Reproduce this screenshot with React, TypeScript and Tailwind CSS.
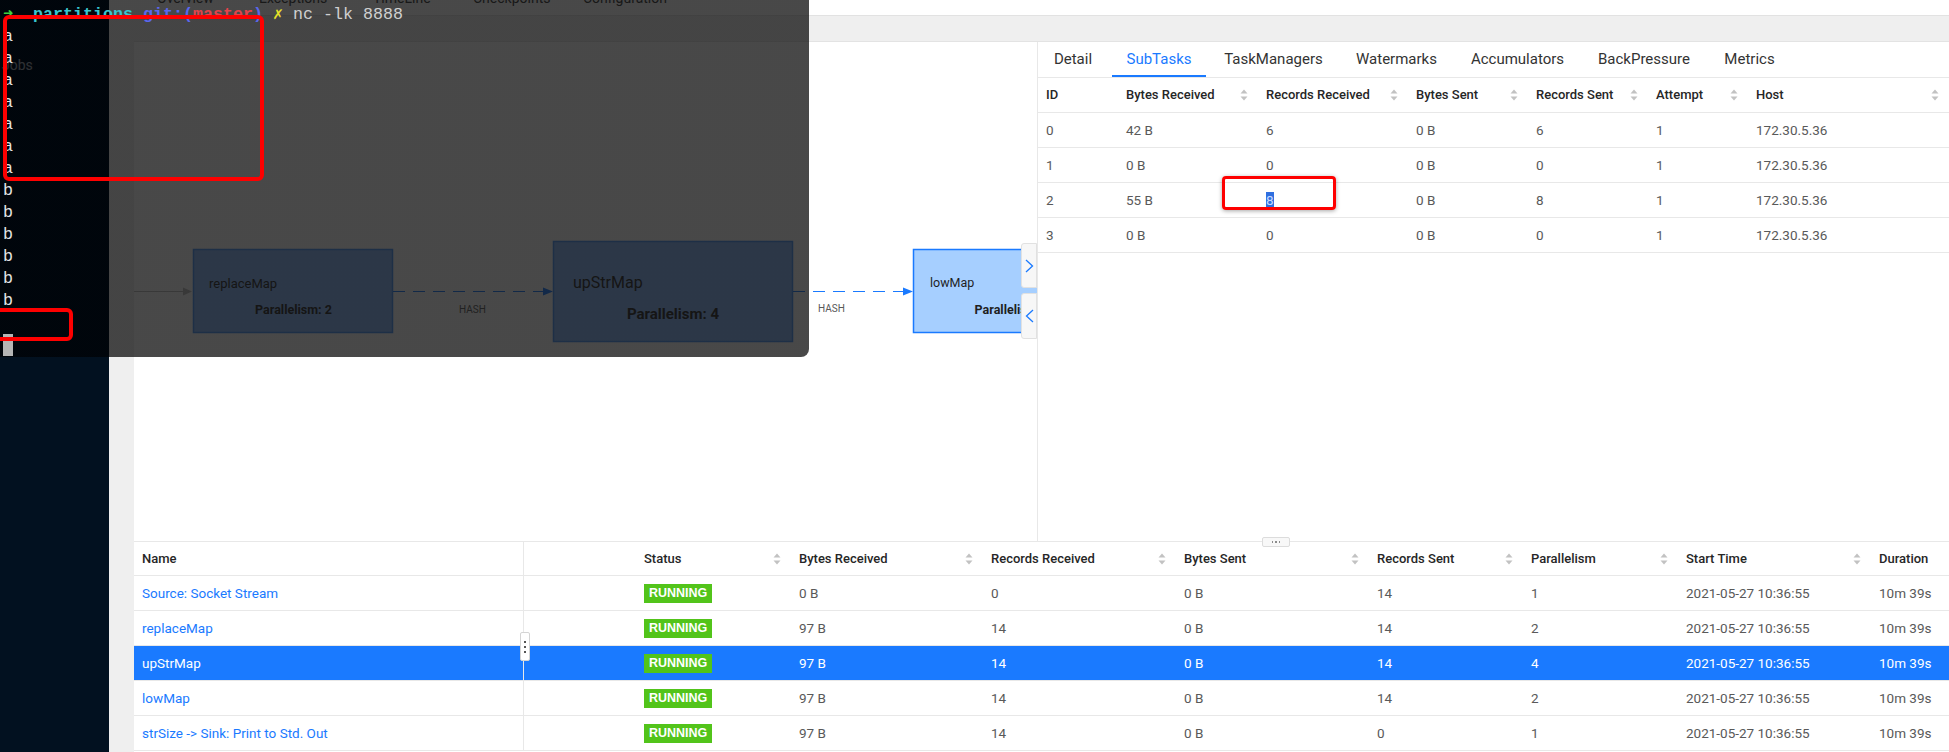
import React from 'react'

const subTaskHeaders = ['ID', 'Bytes Received', 'Records Received', 'Bytes Sent', 'Records Sent', 'Attempt', 'Host']

const subTaskRows = [
    ['0', '42 B', '6', '0 B', '6', '1', '172.30.5.36'],
    ['1', '0 B', '0', '0 B', '0', '1', '172.30.5.36'],
    ['2', '55 B', '8', '0 B', '8', '1', '172.30.5.36'],
    ['3', '0 B', '0', '0 B', '0', '1', '172.30.5.36'],
]

const vertexHeaders = [
    { label: 'Name', sort: false },
    { label: '', sort: false },
    { label: 'Status', sort: true },
    { label: 'Bytes Received', sort: true },
    { label: 'Records Received', sort: true },
    { label: 'Bytes Sent', sort: true },
    { label: 'Records Sent', sort: true },
    { label: 'Parallelism', sort: true },
    { label: 'Start Time', sort: true },
    { label: 'Duration', sort: false },
]

const vertexRows = [
    { name: 'Source: Socket Stream', br: '0 B', rr: '0', bs: '0 B', rs: '14', par: '1' },
    { name: 'replaceMap', br: '97 B', rr: '14', bs: '0 B', rs: '14', par: '2' },
    { name: 'upStrMap', br: '97 B', rr: '14', bs: '0 B', rs: '14', par: '4', selected: true },
    { name: 'lowMap', br: '97 B', rr: '14', bs: '0 B', rs: '14', par: '2' },
    { name: 'strSize -> Sink: Print to Std. Out', br: '97 B', rr: '14', bs: '0 B', rs: '0', par: '1' },
]

const tabs = [
    { name: 'Detail', w: 'w-[70px]' },
    { name: 'SubTasks', w: 'w-[94px]', active: true },
    { name: 'TaskManagers', w: 'w-[127px]' },
    { name: 'Watermarks', w: 'w-[111px]' },
    { name: 'Accumulators', w: 'w-[123px]' },
    { name: 'BackPressure', w: 'w-[122px]' },
    { name: 'Metrics', w: 'w-[81px]' },
]

const termLines = ['a', 'a', 'a', 'a', 'a', 'a', 'a', 'b', 'b', 'b', 'b', 'b', 'b']

const SortIcon = () => (
    <svg width="8" height="12" viewBox="0 0 8 12" className="absolute right-[10px] top-1/2 -translate-y-1/2">
        <path d="M4 0.5 L7.5 4.5 H0.5 Z" fill="#c2c2c2" />
        <path d="M4 11.5 L7.5 7.5 H0.5 Z" fill="#c2c2c2" />
    </svg>
)

const Chevron = ({ left }: { left?: boolean }) => (
    <svg width="9" height="14" viewBox="0 0 9 14">
        <polyline
            points={left ? '8,1 1.5,7 8,13' : '1,1 7.5,7 1,13'}
            fill="none"
            stroke="#1a7aff"
            strokeWidth="1.3"
        />
    </svg>
)

const JobGraph = () => (
    <svg width="903" height="499" className="absolute left-0 top-0">
        {/* incoming edge */}
        <line x1="0" y1="249.5" x2="51" y2="249.5" stroke="#bcbcbc" strokeWidth="1" />
        <path d="M58 249.5 L49 245.5 L49 253.5 Z" fill="#bcbcbc" />

        <rect x="59.5" y="207.5" width="199" height="83" fill="#87b6fa" stroke="#4a94f5" strokeWidth="1.5" />
        <text x="75" y="246" fontSize="13" fill="#262626">replaceMap</text>
        <text x="159.5" y="272" fontSize="12.5" fontWeight="700" fill="#262626" textAnchor="middle">Parallelism: 2</text>

        <line x1="259" y1="249.5" x2="410" y2="249.5" stroke="#1a7aff" strokeWidth="1.2" strokeDasharray="12 8" />
        <path d="M419 249.5 L409 245.5 L409 253.5 Z" fill="#1a7aff" />
        <text x="325" y="270.5" fontSize="10" fill="#595959">HASH</text>

        <rect x="419.5" y="199.5" width="239" height="100" fill="#87b6fa" stroke="#4a94f5" strokeWidth="1.5" />
        <text x="439" y="246" fontSize="16" fill="#262626">upStrMap</text>
        <text x="539" y="277" fontSize="15" fontWeight="700" fill="#262626" textAnchor="middle">Parallelism: 4</text>

        <line x1="659" y1="249.5" x2="770" y2="249.5" stroke="#1a7aff" strokeWidth="1.2" strokeDasharray="12 8" />
        <path d="M779 249.5 L769 245.5 L769 253.5 Z" fill="#1a7aff" />
        <text x="684" y="270" fontSize="10" fill="#595959">HASH</text>

        <rect x="779.5" y="207.5" width="199" height="83" fill="#a6cfff" stroke="#1a7aff" strokeWidth="1.5" />
        <text x="796" y="245" fontSize="12.5" fill="#1f1f1f">lowMap</text>
        <text x="879" y="272" fontSize="12.5" fontWeight="700" fill="#1f1f1f" textAnchor="middle">Parallelism: 2</text>
    </svg>
)

const App = () => {
    return (
        <div className="relative flex h-[752px] w-[1949px] overflow-hidden bg-[#efefef] font-[Roboto,'Liberation_Sans',Arial,sans-serif]">
            {/* sidebar */}
            <div className="w-[109px] shrink-0 bg-[#021120] pl-[2px] pt-[57px]">
                <p className="text-[14px] leading-[16px] text-white">Jobs</p>
            </div>

            {/* main */}
            <div className="flex flex-1 flex-col">
                <div className="flex h-[16px] overflow-hidden border-b border-[#e2e2e2] bg-white pl-[48px] text-[14px] leading-[16px] text-[#333]">
                    <span className="-mt-[10px] w-[102px]">Overview</span>
                    <span className="-mt-[10px] w-[114px]">Exceptions</span>
                    <span className="-mt-[10px] w-[100px]">TimeLine</span>
                    <span className="-mt-[10px] w-[110px]">Checkpoints</span>
                    <span className="-mt-[10px] w-[120px]">Configuration</span>
                </div>
                <div className="h-[25px]" />

                <div className="ml-[25px] flex flex-1 flex-col border-t border-[#e3e3e3] bg-white">
                    {/* graph + detail panel */}
                    <div className="relative flex h-[500px] border-b border-[#e8e8e8]">
                        <div className="relative flex-1 overflow-hidden">
                            <JobGraph />
                            <div className="absolute left-[887px] top-[201px] flex h-[45px] w-[16px] items-center justify-center rounded-l-[3px] border border-[#e1e1e1] bg-[#f7f7f7]">
                                <Chevron />
                            </div>
                            <div className="absolute left-[887px] top-[251px] flex h-[46px] w-[16px] items-center justify-center rounded-l-[3px] border border-[#e1e1e1] bg-[#f7f7f7]">
                                <Chevron left />
                            </div>
                        </div>

                        <div className="w-[912px] border-l border-[#e8e8e8]">
                            <div className="flex h-[36px] gap-[4px] border-b border-[#e8e8e8]">
                                {tabs.map((t) => (
                                    <div
                                        key={t.name}
                                        className={`${t.w} flex items-center justify-center text-[15px] ${t.active ? 'border-b-2 border-[#1a7aff] pt-[2px] text-[#1a7aff]' : 'text-[#333]'}`}
                                    >
                                        {t.name}
                                    </div>
                                ))}
                            </div>
                            <div className="grid h-[35px] grid-cols-[80px_140px_150px_120px_120px_100px_1fr] border-b border-[#e8e8e8] text-[13px] font-medium text-[#262626]">
                                {subTaskHeaders.map((h, i) => (
                                    <div key={h} className="relative flex items-center px-2">
                                        {h}
                                        {i > 0 && <SortIcon />}
                                    </div>
                                ))}
                            </div>
                            {subTaskRows.map((row, r) => (
                                <div key={r} className="grid h-[35px] grid-cols-[80px_140px_150px_120px_120px_100px_1fr] border-b border-[#e8e8e8] text-[13.5px] text-[#595959]">
                                    {row.map((cell, c) => (
                                        <div key={c} className="flex items-center px-2">
                                            {r === 2 && c === 2 ? (
                                                <span className="bg-[#2f6fe0] leading-[17px] text-[#c9dbff]">{cell}</span>
                                            ) : (
                                                cell
                                            )}
                                        </div>
                                    ))}
                                </div>
                            ))}
                        </div>

                        <div className="absolute left-[1128px] top-[495px] z-[5] flex h-[10px] w-[28px] items-center justify-center gap-[2px] rounded-[2px] border border-[#dcdcdc] bg-[#f8f8f8]">
                            <span className="h-[1.5px] w-[1.5px] bg-[#8c8c8c]" />
                            <span className="h-[1.5px] w-[1.5px] bg-[#8c8c8c]" />
                            <span className="h-[1.5px] w-[1.5px] bg-[#8c8c8c]" />
                        </div>
                    </div>

                    {/* vertex table */}
                    <div className="relative">
                        <div className="grid h-[34px] grid-cols-[390px_112px_155px_192px_193px_193px_154px_155px_193px_1fr] border-b border-[#e8e8e8] text-[13px] font-medium text-[#262626]">
                            {vertexHeaders.map((h, i) => (
                                <div key={i} className={`relative flex items-center px-2 ${i === 0 ? 'border-r border-[#e8e8e8]' : ''}`}>
                                    {h.label}
                                    {h.sort && <SortIcon />}
                                </div>
                            ))}
                        </div>
                        {vertexRows.map((v) => {
                            const cells = [v.br, v.rr, v.bs, v.rs, v.par, '2021-05-27 10:36:55', '10m 39s']
                            return (
                                <div
                                    key={v.name}
                                    className={`grid h-[35px] grid-cols-[390px_112px_155px_192px_193px_193px_154px_155px_193px_1fr] border-b border-[#e8e8e8] text-[13.5px] ${v.selected ? 'bg-[#1a7aff] text-white' : 'text-[#595959]'}`}
                                >
                                    <div className={`flex items-center border-r border-[#e8e8e8] px-2 ${v.selected ? 'text-white' : 'text-[#1a7aff]'}`}>
                                        {v.name}
                                    </div>
                                    <div />
                                    <div className="flex items-center px-2">
                                        <span className="flex h-[19px] items-center bg-[#52c41a] px-[5px] font-['Liberation_Sans',Arial,sans-serif] text-[12.5px] font-bold text-white">
                                            RUNNING
                                        </span>
                                    </div>
                                    {cells.map((c, i) => (
                                        <div key={i} className="flex items-center whitespace-nowrap px-2">
                                            {c}
                                        </div>
                                    ))}
                                </div>
                            )
                        })}

                        <div className="absolute left-[386px] top-[90px] flex h-[29px] w-[10px] flex-col items-center justify-center gap-[3px] rounded-[2px] border border-[#d4d4d4] bg-white">
                            <span className="h-[2px] w-[2px] bg-[#555]" />
                            <span className="h-[2px] w-[2px] bg-[#555]" />
                            <span className="h-[2px] w-[2px] bg-[#555]" />
                        </div>
                    </div>
                </div>
            </div>

            {/* terminal window lying over the page */}
            <div className="absolute left-0 top-0 z-10 h-[357px] w-[809px] overflow-hidden whitespace-pre rounded-br-[8px] bg-[linear-gradient(to_right,rgba(0,3,7,0.82)_109px,rgba(16,16,16,0.765)_109px)] pl-[3px] pt-[4px] font-['Liberation_Mono','DejaVu_Sans_Mono',monospace] text-[16.67px] leading-[22px] text-[#e4e4e4]">
                <div className="flex">
                    <span className="inline-block w-[30px] font-bold text-[#3fd23f]">➜</span>
                    <span className="font-bold text-[#39c5cf]">partitions </span>
                    <span className="font-bold text-[#5a67ee]">git:(</span>
                    <span className="font-bold text-[#e3434a]">master</span>
                    <span className="font-bold text-[#5a67ee]">) </span>
                    <span className="inline-block w-[20px] font-bold text-[#e6e229]">✗</span>
                    <span className="text-[#cfcfcf]">nc -lk 8888</span>
                </div>
                {termLines.map((l, i) => (
                    <div key={i}>{l}</div>
                ))}
                <div className="h-[22px]" />
                <div className="h-[22px] w-[10px] bg-[#b5b5b5]" />
            </div>

            {/* red annotation boxes */}
            <div className="absolute left-[3px] top-[15px] z-20 h-[166px] w-[261px] rounded-[6px] border-4 border-[#fe0000]" />
            <div className="absolute -left-[10px] top-[308px] z-20 h-[33px] w-[83px] rounded-[6px] border-4 border-[#fe0000]" />
            <div className="absolute left-[1222px] top-[176px] z-20 h-[34px] w-[114px] rounded-[4px] border-[3px] border-[#fe0000] shadow-[0_1px_4px_rgba(0,0,0,0.35)]" />
        </div>
    )
}

export default App
